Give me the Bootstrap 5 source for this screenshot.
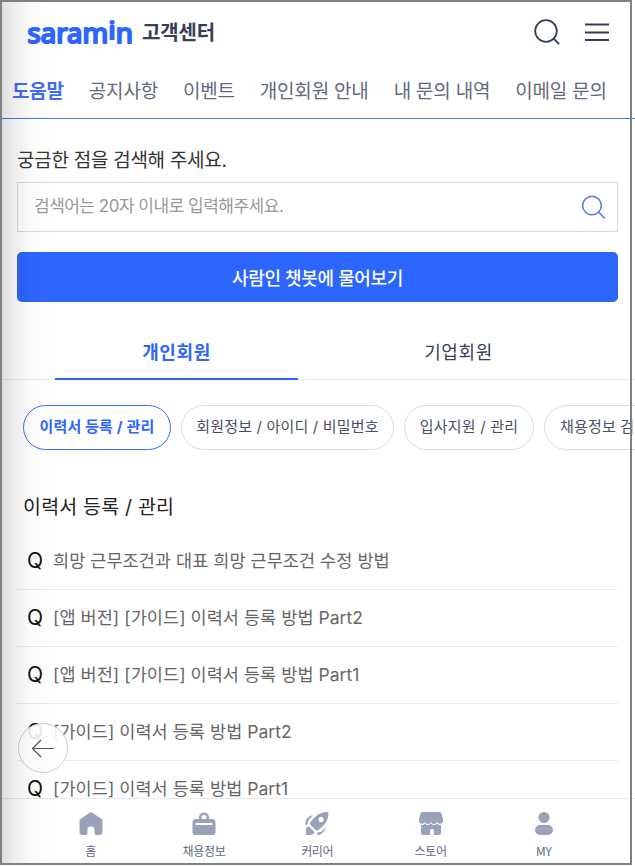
<!DOCTYPE html>
<html lang="ko">
<head>
<meta charset="utf-8">
<meta name="viewport" content="width=device-width, initial-scale=1">
<title>사람인 고객센터</title>
<link rel="stylesheet" href="https://cdn.jsdelivr.net/npm/bootstrap@5.3.0/dist/css/bootstrap.min.css">
<style>
body{font-family:"Noto Sans CJK KR","Noto Sans",sans-serif;color:#222;width:635px;height:867px;overflow:hidden;background:#fff}
main{font-family:Inter,"Noto Sans CJK KR",sans-serif}
a{text-decoration:none;color:inherit}
.app{height:867px}
.top-bar{height:63px;padding:0 25px 0 27px}
.logo{width:107px;height:30px;overflow:visible}
.site{font-size:20px;font-weight:700;color:#373f57;letter-spacing:-.15px;line-height:30px;margin-left:8px}
.menu{height:56px;padding:0 0 0 12px;gap:25px;border-bottom:1px solid #4876ef;color:#5f6980;font-size:19px;letter-spacing:-.2px;line-height:54px}
.menu .on{color:#3f6df0;font-weight:700}
.search-area{padding:29px 17px 0}
.search-area label{font-size:19px;letter-spacing:-.27px;line-height:26px;color:#333}
.search-box{height:50px;border:1px solid #d8d8d8;padding:0 11px 0 16px;margin-top:8px;font-size:17px;color:#999;letter-spacing:-.5px}
.search-box span{padding-bottom:1px}
.bot{height:50px;border-radius:5px;background:#2d65ff;color:#fff;font-size:18px;font-weight:500;letter-spacing:-.35px;margin-top:20px;line-height:50px;padding:2px 0 0;border:0}
.tab-row{height:78px;border-bottom:1px solid #e6e8f2;padding-left:55px;gap:39px;font-size:18px;color:#373f57}
.tab-row a{width:243px;height:78px;line-height:50px;padding-top:26px;letter-spacing:.6px}
.tab-row .on{border-bottom:2px solid #2d65ff;color:#2d65ff;font-weight:700}
.chips{padding:25px 0 0 23px;gap:10px;font-size:15px;letter-spacing:.18px;color:#475067}
.chips a{height:45px;border:1px solid #d7dce5;border-radius:23px;line-height:41px;flex:none;text-align:center;white-space:nowrap}
.chips .on{border-color:#3c6df5;color:#2d65ff;font-weight:700}
.w1{width:148px}.w2{width:213px}.w3{width:130px}.chips .w4{width:122px;padding-left:15px;text-align:left}
h2{font-size:19.5px;font-weight:400;line-height:30px;margin:42px 0 0 23px;color:#222;letter-spacing:.2px}
.faq{margin:11px 17px 0}
.faq li{height:57px;border-bottom:1px solid #ebebeb;padding-left:10px;font-size:17.5px;letter-spacing:.05px;color:#666;line-height:55px}
.faq .q{font-size:21px;color:#111;width:26px}
.faq li a{line-height:55px}
.dock{position:absolute;left:0;top:798px;width:635px;height:69px;background:#fff;border-top:1px solid #e6e8f2;padding:10px 34px 0;font-size:12px;color:#5f6980}
.dock a{width:113.3px;text-align:center;letter-spacing:-.3px;line-height:18px}
.dock svg{display:block;margin:0 auto 3px;width:30px;height:30px;fill:#98a2b8}
.back{position:absolute;left:18px;top:723px;width:50px;height:50px;border:1px solid #ccc;border-radius:50%;background:rgba(255,255,255,.9)}
.shade{position:absolute;left:2px;top:2px;width:50px;height:862px;background:linear-gradient(90deg,rgba(0,0,0,.13),rgba(0,0,0,.07) 24%,rgba(0,0,0,.02) 58%,transparent);pointer-events:none}
.edge{position:absolute;left:0;top:0;width:632px;height:865px;border:2px solid #808080;pointer-events:none}
</style>
<script src="https://cdn.jsdelivr.net/npm/bootstrap@5.3.0/dist/js/bootstrap.bundle.min.js"></script>
</head>
<body>
<div class="app position-relative overflow-hidden">
<header>
<div class="top-bar d-flex align-items-center">
<svg class="logo" viewBox="0 0 107 30" aria-label="saramin"><g fill="#2d65ff" stroke="#2d65ff" stroke-width="2.1" stroke-linejoin="round" font-family="Noto Sans" font-weight="400" font-size="27"><text x="0.6" y="26" textLength="80.500" lengthAdjust="spacingAndGlyphs">saram</text><text x="81.500" y="22" font-size="24" textLength="7" lengthAdjust="spacingAndGlyphs">i</text><text x="88.800" y="26" textLength="17.200" lengthAdjust="spacingAndGlyphs">n</text></g></svg>
<span class="site">고객센터</span>
<div class="ms-auto d-flex align-items-center gap-4">
<svg width="27" height="28" viewBox="0 0 27 28" fill="none" stroke="#373f57" stroke-width="1.800"><circle cx="13" cy="13" r="10.800"/><path d="m20 20 6.200 6.200"/></svg>
<svg width="26" height="20" viewBox="0 0 26 20" stroke="#373f57" stroke-width="1.800"><path d="M1 2.500h24M1 10.500h24M1 18h24"/></svg>
</div>
</div>
<nav class="menu d-flex text-nowrap"><a class="on" href="#">도움말</a><a href="#">공지사항</a><a href="#">이벤트</a><a href="#">개인회원 안내</a><a href="#">내 문의 내역</a><a href="#">이메일 문의</a></nav>
</header>
<main>
<section class="search-area">
<label class="d-block">궁금한 점을 검색해 주세요.</label>
<div class="search-box d-flex align-items-center justify-content-between"><span>검색어는 20자 이내로 입력해주세요.</span>
<svg width="26" height="26" viewBox="0 0 26 26" fill="none" stroke="#5478f0" stroke-width="1.500"><circle cx="12" cy="11.500" r="9.300"/><path d="m18.500 18 6.300 6.500"/></svg></div>
<button class="bot btn w-100 d-block">사람인 챗봇에 물어보기</button>
</section>
<nav class="tab-row d-flex text-center"><a class="on" href="#">개인회원</a><a href="#">기업회원</a></nav>
<nav class="chips d-flex"><a class="on w1" href="#">이력서 등록 / 관리</a><a class="w2" href="#">회원정보 / 아이디 / 비밀번호</a><a class="w3" href="#">입사지원 / 관리</a><a class="w4" href="#">채용정보 검색</a></nav>
<h2>이력서 등록 / 관리</h2>
<ul class="faq list-unstyled">
<li class="d-flex"><span class="q">Q</span><a href="#">희망 근무조건과 대표 희망 근무조건 수정 방법</a></li>
<li class="d-flex"><span class="q">Q</span><a href="#">[앱 버전] [가이드] 이력서 등록 방법 Part2</a></li>
<li class="d-flex"><span class="q">Q</span><a href="#">[앱 버전] [가이드] 이력서 등록 방법 Part1</a></li>
<li class="d-flex"><span class="q">Q</span><a href="#">[가이드] 이력서 등록 방법 Part2</a></li>
<li class="d-flex"><span class="q">Q</span><a href="#">[가이드] 이력서 등록 방법 Part1</a></li>
</ul>
</main>
<nav class="dock d-flex">
<a href="#"><svg viewBox="0 0 30 30"><path d="M13.200 4q1.800-1.300 3.600 0l8 5.400q1.700 1.100 1.700 3V23q0 3-3 3h-3q-2 0-2-2v-3.500q0-3-3.500-3t-3.500 3V24q0 2-2 2h-3q-3 0-3-3V12.400q0-1.900 1.700-3z"/></svg>홈</a>
<a href="#"><svg viewBox="0 0 30 30"><path fill-rule="evenodd" d="M10 10V8.500a5 5 0 0 1 10 0V10h3q3.500 0 3.500 3.500V23q0 3-3 3h-17q-3 0-3-3v-9.500Q3.500 10 7 10zm2.500 0h5V8.500a2.500 2.500 0 0 0-5 0zM6.500 14v2h17v-2z"/></svg>채용정보</a>
<a href="#"><svg viewBox="0 0 30 30"><path fill-rule="evenodd" d="M25.500 3q1 0 1 1 0 8-5.500 13l-4.500 4q-1.500 1.200-3 0l-5-5q-1.300-1.400 0-3l4-4.500Q17.500 3 25.500 3zM19 8a2.600 2.600 0 1 0 .1 0z"/><path d="M11 6 6.500 11.500q-1.300 1.500-.5 3l-1.500 2q-1.500-1-1-3Q4.500 7.500 11 6zM24 18.500q-2 5.500-7 7.500-1.500.5-2-1l1-2q2 .8 3.500-.5zM6.500 17l6 6q-1 3-4.500 3H5.500Q4 26 4 24.500V21q.2-3 2.500-4z"/></svg>커리어</a>
<a href="#"><svg viewBox="0 0 30 30"><path d="M6.500 3h17q1.500 0 2 1.500L27 10v1.500a3 3 0 0 1-6 .5 3 3 0 0 1-6 0 3 3 0 0 1-6 0 3 3 0 0 1-6-.5V10l1.500-5.500Q5 3 6.500 3zM5 16q2.500.5 4-1.500 3 3 6 0 3 3 6 0 1.500 2 4 1.500v8q0 2-2 2h-5v-4.500q0-1.500-1.500-1.500h-1q-1.500 0-1.500 1.500V26H7q-2 0-2-2z"/></svg>스토어</a>
<a href="#"><svg viewBox="0 0 30 30"><circle cx="15" cy="8.500" r="5.500"/><rect x="6" y="16" width="18" height="10" rx="5"/></svg>MY</a>
</nav>
<button class="back p-0 d-flex align-items-center justify-content-center" aria-label="뒤로"><svg width="24" height="20" viewBox="0 0 24 20" fill="none" stroke="#555" stroke-width="1.200"><path d="M23 10.500H1.500M10 2 1.500 10.500l8.500 8.500"/></svg></button>
<div class="shade"></div><div class="edge"></div>
</div>
</body>
</html>
